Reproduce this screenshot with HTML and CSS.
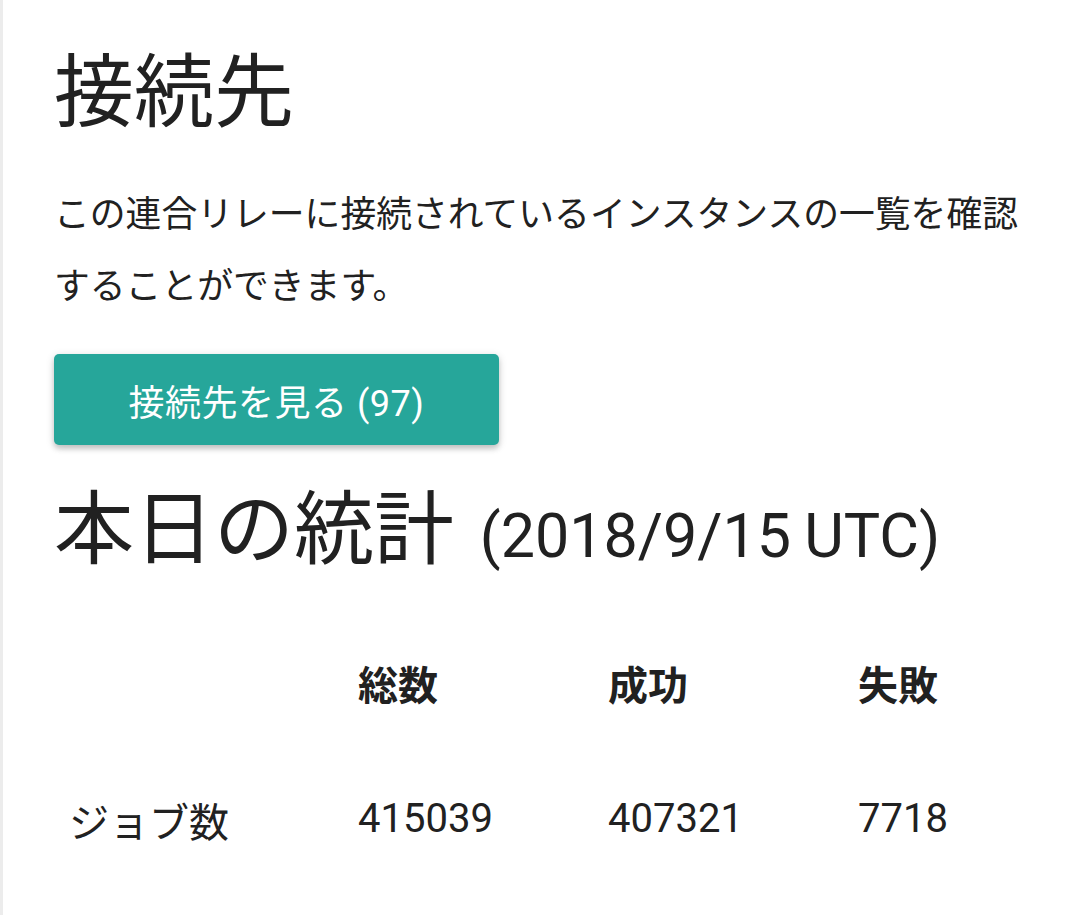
FILE: index.html
```html
<!DOCTYPE html>
<html lang="ja">
<head>
<meta charset="utf-8">
<title>接続先</title>
<link rel="stylesheet" href="styles.css">
</head>
<body>
<main class="page">
  <h1 class="title">接続先</h1>
  <p class="lead">この連合リレーに接続されているインスタンスの一覧を確認することができます。</p>
  <a class="btn" href="#">接続先を見る (97)</a>
  <h2 class="title title-stats">本日の統計 <small class="date">(2018/9/15 UTC)</small></h2>
  <table class="stats">
    <colgroup>
      <col class="c-label">
      <col class="c-num">
      <col class="c-num">
      <col>
    </colgroup>
    <thead>
      <tr>
        <th></th>
        <th>総数</th>
        <th>成功</th>
        <th>失敗</th>
      </tr>
    </thead>
    <tbody>
      <tr>
        <td class="label">ジョブ数</td>
        <td>415039</td>
        <td>407321</td>
        <td>7718</td>
      </tr>
    </tbody>
  </table>
</main>
</body>
</html>
```

FILE: styles.css
```css
html, body {
  margin: 0;
  padding: 0;
  background: #ffffff;
}

body {
  font-family: Roboto, "Noto Sans CJK JP", sans-serif;
  color: #212121;
}

.page {
  box-sizing: border-box;
  min-height: 100vh;
  border-left: 3px solid #ececec;
  padding: 45px 54px 0 51px;
}

.title {
  margin: 0;
  font-size: 80px;
  font-weight: 400;
  line-height: 96px;
}

.lead {
  margin: 38px 0 0;
  font-size: 35.8px;
  line-height: 72px;
}

.btn {
  display: inline-flex;
  align-items: center;
  justify-content: center;
  box-sizing: border-box;
  margin-top: 31px;
  width: 445px;
  height: 91px;
  background: #26a69a;
  color: #ffffff;
  text-decoration: none;
  font-size: 36px;
  letter-spacing: 0.5px;
  border-radius: 5px;
  box-shadow: 0 4px 5px 0 rgba(0, 0, 0, 0.14), 0 2px 8px 0 rgba(0, 0, 0, 0.16);
}

.title-stats {
  margin-top: 37px;
  word-spacing: 6px;
}

.date {
  font-size: 61px;
  word-spacing: -2px;
}

.stats {
  margin-top: 31px;
  width: 100%;
  border-collapse: collapse;
  table-layout: fixed;
  font-size: 40px;
}

.c-label {
  width: 289px;
}

.c-num {
  width: 250px;
}

.stats th,
.stats td {
  height: 135px;
  padding: 0 0 0 15px;
  text-align: left;
  vertical-align: middle;
}

.stats th {
  font-weight: 700;
}

.stats td.label {
  padding-top: 2px;
}
```
